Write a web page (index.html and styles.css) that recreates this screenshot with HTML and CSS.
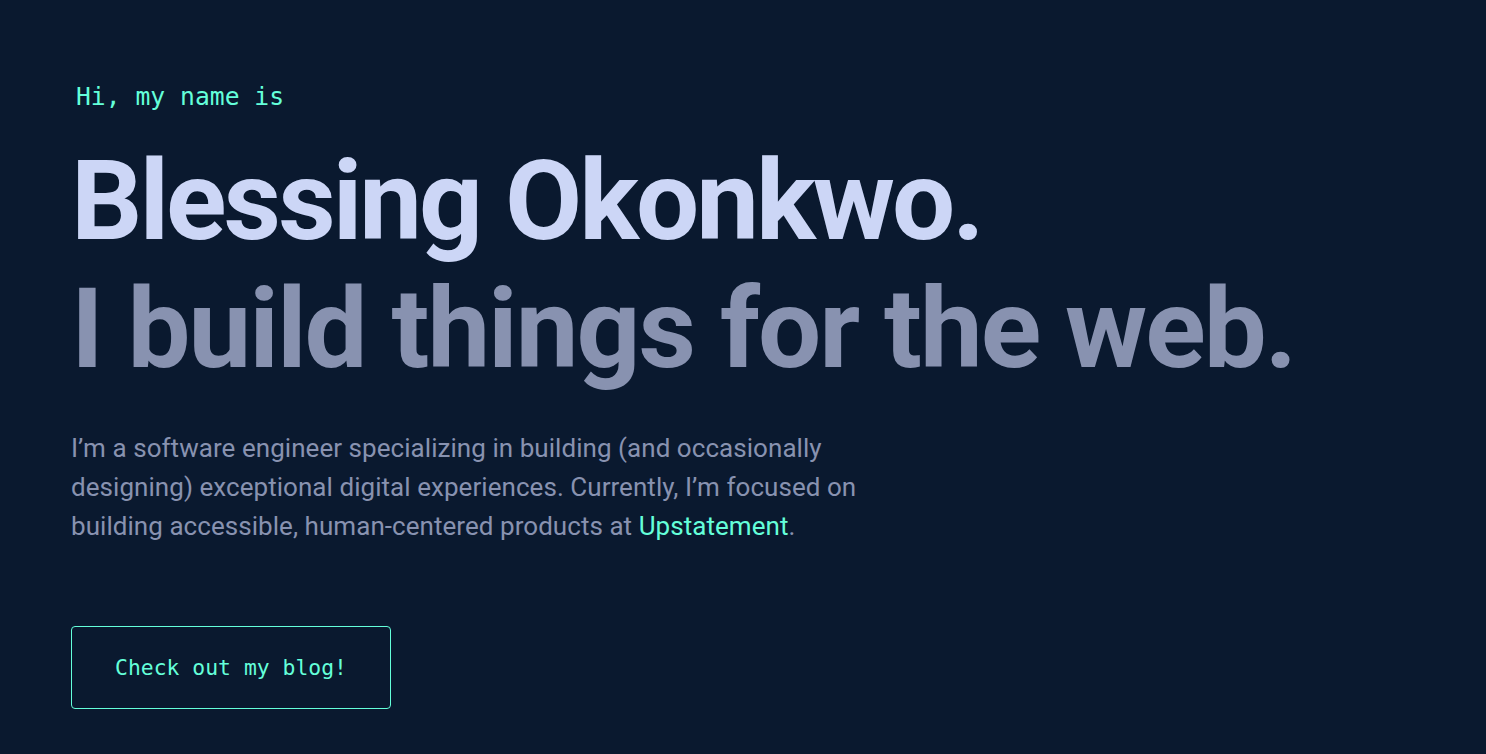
FILE: index.html
```html
<!DOCTYPE html>
<html lang="en">
<head>
<meta charset="utf-8">
<title>Blessing Okonkwo</title>
<link rel="stylesheet" href="styles.css">
</head>
<body>
<main class="hero">
  <h1 class="intro">Hi, my name is</h1>
  <h2 class="big-heading name">Blessing Okonkwo.</h2>
  <h3 class="big-heading tagline">I build things for the web.</h3>
  <p class="about">I’m a software engineer specializing in building (and occasionally<br>designing) exceptional digital experiences. Currently, I’m focused on<br>building accessible, human-centered products at <a class="link" href="#">Upstatement</a>.</p>
  <a class="blog-btn" href="#">Check out my blog!</a>
</main>
</body>
</html>
```

FILE: styles.css
```css
html, body {
  margin: 0;
  padding: 0;
  background: #0a192f;
  height: 100%;
}
body {
  font-family: Roboto, Inter, sans-serif;
  color: #8892b0;
}
.hero {
  display: flex;
  flex-direction: column;
  align-items: flex-start;
  padding: 84px 0 0 71px;
}
.intro {
  margin: 0 0 0 5px;
  font-family: "DejaVu Sans Mono", "Liberation Mono", monospace;
  font-weight: 400;
  font-size: 24.7px;
  line-height: 26px;
  color: #64ffda;
}
.big-heading {
  margin: 0;
  font-family: Roboto, Inter, sans-serif;
  font-weight: 700;
  font-size: 112px;
  line-height: 128px;
  letter-spacing: -2px;
}
.name {
  margin-top: 27px;
  letter-spacing: -3px;
  color: #ccd6f6;
}
.tagline {
  color: #8892b0;
}
.about {
  margin: 36px 0 0;
  font-size: 26px;
  line-height: 39px;
  letter-spacing: 0.05px;
  color: #8892b0;
}
.link {
  color: #64ffda;
  text-decoration: none;
}
.blog-btn {
  margin-top: 80px;
  box-sizing: border-box;
  width: 320px;
  height: 83px;
  display: flex;
  align-items: center;
  justify-content: center;
  border: 1px solid #64ffda;
  border-radius: 4px;
  font-family: "DejaVu Sans Mono", "Liberation Mono", monospace;
  font-size: 21.4px;
  color: #64ffda;
  text-decoration: none;
}
```
